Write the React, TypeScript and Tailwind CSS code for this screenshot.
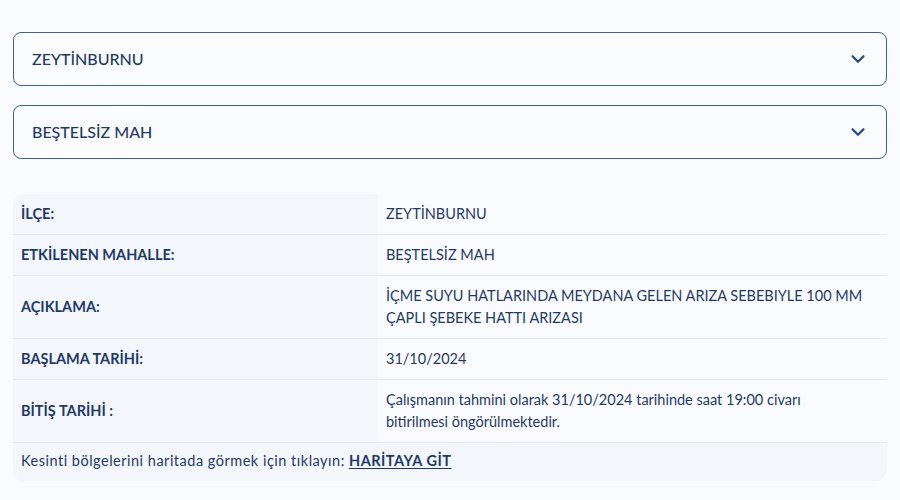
import { ChevronDown } from "lucide-react";

const rows: { label: string; value: string }[] = [
  { label: "İLÇE:", value: "ZEYTİNBURNU" },
  { label: "ETKİLENEN MAHALLE:", value: "BEŞTELSİZ MAH" },
  {
    label: "AÇIKLAMA:",
    value: "İÇME SUYU HATLARINDA MEYDANA GELEN ARIZA SEBEBIYLE 100 MM ÇAPLI ŞEBEKE HATTI ARIZASI",
  },
  { label: "BAŞLAMA TARİHİ:", value: "31/10/2024" },
  {
    label: "BİTİŞ TARİHİ :",
    value: "Çalışmanın tahmini olarak 31/10/2024 tarihinde saat 19:00 civarı bitirilmesi öngörülmektedir.",
  },
];

function Select({ value }: { value: string }) {
  return (
    <div className="flex h-[54px] items-center justify-between rounded-lg border border-[#3a64a0] bg-[#fbfcfe] pl-[18px] pr-[17px]">
      <span className="text-[16px] font-medium text-[#1e3a6b]">{value}</span>
      <ChevronDown className="h-[22px] w-[22px] text-[#1d4a8a]" strokeWidth={2.4} />
    </div>
  );
}

export default function App() {
  return (
    <div
      className="min-h-[500px] bg-[#f9fbfe] px-[13px] pt-[32px] text-[#1e3a6b]"
      style={{ fontFamily: "Lato, 'Noto Sans', sans-serif" }}
    >
      <div className="flex flex-col gap-[19px]">
        <Select value="ZEYTİNBURNU" />
        <Select value="BEŞTELSİZ MAH" />
      </div>

      <div className="mt-[35px] overflow-hidden rounded-xl bg-[#f3f6fb]">
        {rows.map((r) => (
          <div key={r.label} className="grid grid-cols-[365px_1fr] border-b border-[#e5e9f0]">
            <div className="flex items-center px-2 py-[9px] text-[14.5px] font-bold leading-[22px]">
              {r.label}
            </div>
            <div className="bg-[#f9fbfe] py-[9px] pl-2 pr-[23px] text-[14.5px] leading-[22px]">
              {r.value}
            </div>
          </div>
        ))}
        <div className="px-2 pt-[7px] pb-[9px] text-[14.5px] leading-[22px] tracking-[0.5px]">
          Kesinti bölgelerini haritada görmek için tıklayın:{" "}
          <a href="#" className="font-bold underline underline-offset-2">
            HARİTAYA GİT
          </a>
        </div>
      </div>
    </div>
  );
}
